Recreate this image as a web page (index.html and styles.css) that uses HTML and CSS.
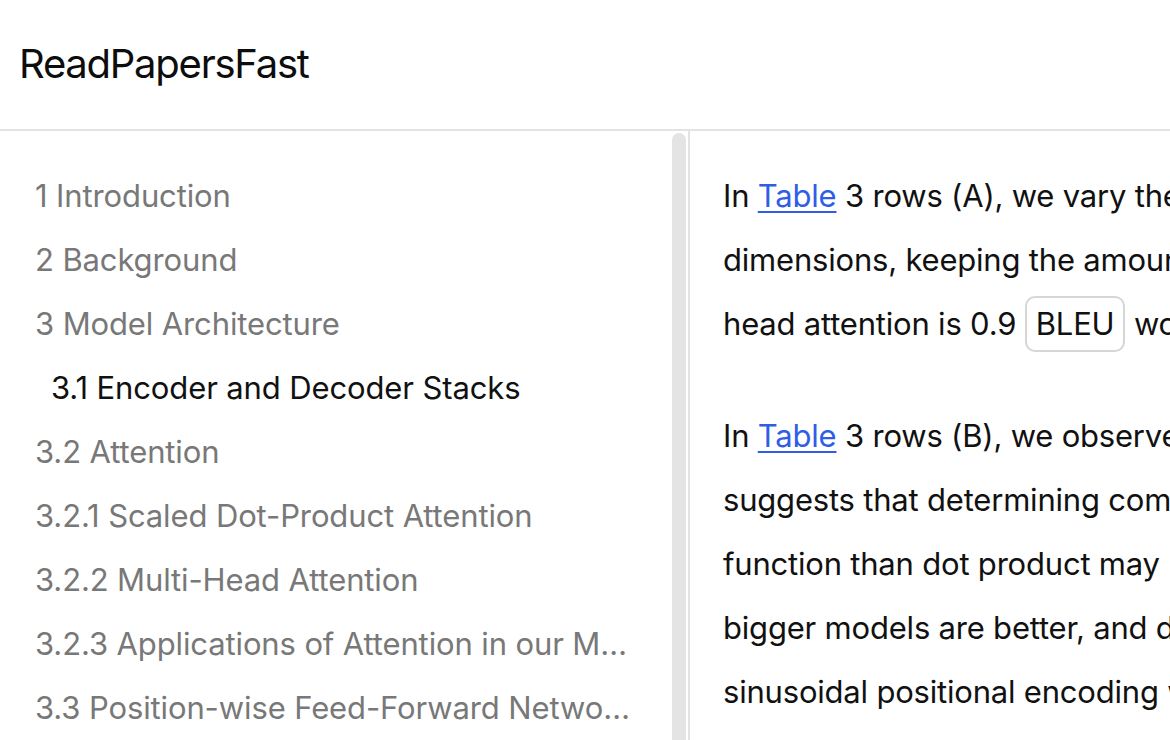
FILE: index.html
```html
<!DOCTYPE html>
<html lang="en">
<head>
<meta charset="utf-8">
<title>ReadPapersFast</title>
<link rel="stylesheet" href="styles.css">
</head>
<body>
<header class="topbar">
  <h1 class="brand">ReadPapersFast</h1>
</header>
<div class="main">
  <nav class="sidebar">
    <ul class="toc">
      <li class="toc-item">1 Introduction</li>
      <li class="toc-item">2 Background</li>
      <li class="toc-item">3 Model Architecture</li>
      <li class="toc-item active">3.1 Encoder and Decoder Stacks</li>
      <li class="toc-item">3.2 Attention</li>
      <li class="toc-item">3.2.1 Scaled Dot-Product Attention</li>
      <li class="toc-item">3.2.2 Multi-Head Attention</li>
      <li class="toc-item">3.2.3 Applications of Attention in our Model</li>
      <li class="toc-item">3.3 Position-wise Feed-Forward Networks</li>
      <li class="toc-item">3.4 Embeddings and Softmax</li>
    </ul>
  </nav>
  <div class="scrolltrack"><div class="thumb"></div></div>
  <article class="content">
    <p class="para">In <a class="ref" href="#">Table</a> 3 rows (A), we vary the number of attention heads and the attention key and value<br>dimensions, keeping the amount of computation constant, as described in Section 3.2.2. While single-<br>head attention is 0.9 <span class="term">BLEU</span> worse than the best setting, quality also drops off with too many heads.</p>
    <p class="para">In <a class="ref" href="#">Table</a> 3 rows (B), we observe that reducing the attention key size hurts model quality. This<br>suggests that determining compatibility is not easy and that a more sophisticated compatibility<br>function than dot product may be beneficial. We further observe in rows (C) and (D) that, as expected,<br>bigger models are better, and dropout is very helpful in avoiding over-fitting. In row (E) we replace our<br>sinusoidal positional encoding with learned positional embeddings, and observe nearly identical results.</p>
  </article>
</div>
</body>
</html>
```
FILE: styles.css
```css
html, body {
  margin: 0;
  padding: 0;
  height: 100%;
  overflow: hidden;
  background: #ffffff;
}
body {
  font-family: Inter, "Noto Sans", "Liberation Sans", sans-serif;
  color: #111111;
}
.topbar {
  display: flex;
  align-items: center;
  padding-left: 19px;
  border-bottom: 2px solid #e3e3e3;
  box-sizing: border-box;
  height: 131px;
}
.brand {
  margin: 0 0 2px 0;
  font-size: 40px;
  font-weight: 400;
  color: #0d0d0d;
  letter-spacing: -1.25px;
}
.main {
  display: flex;
  height: calc(100% - 131px);
}
.sidebar {
  flex: 0 0 672px;
  box-sizing: border-box;
  padding: 33px 36px 0 35px;
  overflow: hidden;
}
.toc {
  list-style: none;
  margin: 0;
  padding: 0;
}
.toc-item {
  font-size: 31px;
  line-height: 64px;
  letter-spacing: -0.12px;
  color: #787878;
  white-space: nowrap;
  overflow: hidden;
  text-overflow: ellipsis;
}
.toc-item.active {
  color: #111111;
  padding-left: 16px;
}
.scrolltrack {
  flex: 0 0 14px;
  padding-top: 2px;
  margin-right: 2px;
  display: flex;
}
.thumb {
  flex: 1;
  background: #e4e4e4;
  border-radius: 7px 7px 0 0;
}
.content {
  flex: 1;
  border-left: 2px solid #e3e3e3;
  padding: 33px 0 0 33px;
  overflow: hidden;
  min-width: 0;
}
.para {
  margin: 0 0 48px 0;
  font-size: 31px;
  line-height: 64px;
  letter-spacing: -0.2px;
  white-space: nowrap;
  color: #111111;
}
.ref {
  color: #2f5ee6;
  text-decoration: underline;
  text-decoration-thickness: 2px;
  text-underline-offset: 4px;
}
.term {
  display: inline-block;
  line-height: 52px;
  padding: 0 9px;
  border: 2px solid #d6d6d6;
  border-radius: 10px;
}
```
